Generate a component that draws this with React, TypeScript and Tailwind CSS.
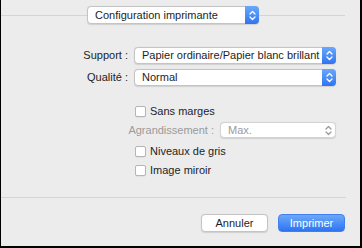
import React from "react";

function Chevrons({ color = "#ffffff" }: { color?: string }) {
  return (
    <svg width="7" height="11" viewBox="0 0 7 11" fill="none">
      <path d="M1 4 L3.5 1.5 L6 4" stroke={color} strokeWidth="1.3" strokeLinecap="round" strokeLinejoin="round" />
      <path d="M1 7 L3.5 9.5 L6 7" stroke={color} strokeWidth="1.3" strokeLinecap="round" strokeLinejoin="round" />
    </svg>
  );
}

function Popup({ label, width, height, disabled = false }: { label: string; width: string; height: string; disabled?: boolean }) {
  return (
    <div
      className={`${width} ${height} flex items-stretch rounded-[4px] border border-[#c4c4c4] bg-white shadow-[0_0.5px_1px_rgba(0,0,0,0.12)] ${disabled ? "bg-[#f5f5f5] border-[#d4d4d4]" : ""}`}
    >
      <div className={`flex-1 flex items-center pl-[7px] truncate ${disabled ? "text-[#9b9b9b]" : "text-[#1e1e1e]"}`}>{label}</div>
      {disabled ? (
        <div className="w-[14px] flex items-center justify-center">
          <Chevrons color="#9b9b9b" />
        </div>
      ) : (
        <div className="w-[14px] -my-px -mr-px flex items-center justify-center rounded-r-[4px] bg-gradient-to-b from-[#6aa8fa] to-[#2e74f2]">
          <Chevrons />
        </div>
      )}
    </div>
  );
}

function Check({ label }: { label: string }) {
  return (
    <div className="h-[16px] flex items-center ml-[134px]">
      <div className="w-[11px] h-[11px] rounded-[2px] border border-[#b5b5b5] bg-white shadow-[0_0.5px_0.5px_rgba(0,0,0,0.1)]" />
      <span className="ml-[4px] text-[#1e1e1e]">{label}</span>
    </div>
  );
}

export default function App() {
  return (
    <div
      className="w-[362px] h-[248px] bg-[#ececec] border-l border-r-2 border-b-2 border-black flex flex-col text-[11px] leading-none"
      style={{ fontFamily: '"Liberation Sans", Arial, sans-serif' }}
    >
      {/* Title popup on separator */}
      <div className="mt-[6px] flex items-center h-[18px]">
        <div className="w-[86px] h-px bg-[#d4d4d4]" />
        <div className="w-[172px] h-[18px] flex items-stretch rounded-[4px] border border-[#c4c4c4] bg-white shadow-[0_0.5px_1px_rgba(0,0,0,0.12)]">
          <div className="flex-1 flex items-center pl-[7px] text-[#1e1e1e]">Configuration imprimante</div>
          <div className="w-[14px] -my-px -mr-px flex items-center justify-center rounded-r-[4px] bg-gradient-to-b from-[#6aa8fa] to-[#2e74f2]">
            <Chevrons />
          </div>
        </div>
        <div className="w-[86px] h-px bg-[#d4d4d4]" />
      </div>

      {/* Support */}
      <div className="mt-[23px] flex items-center">
        <div className="w-[127px] text-right text-[#1e1e1e]">Support :</div>
        <div className="ml-[6px]">
          <Popup label="Papier ordinaire/Papier blanc brillant" width="w-[202px]" height="h-[17px]" />
        </div>
      </div>

      {/* Qualité */}
      <div className="mt-[5px] flex items-center">
        <div className="w-[127px] text-right text-[#1e1e1e]">Qualité :</div>
        <div className="ml-[6px]">
          <Popup label="Normal" width="w-[202px]" height="h-[17px]" />
        </div>
      </div>

      <div className="mt-[17px]">
        <Check label="Sans marges" />
      </div>

      {/* Agrandissement */}
      <div className="mt-[3px] flex items-center">
        <div className="w-[213px] text-right text-[#9b9b9b]">Agrandissement :</div>
        <div className="ml-[6px]">
          <Popup label="Max." width="w-[116px]" height="h-[16px]" disabled />
        </div>
      </div>

      <div className="mt-[5px]">
        <Check label="Niveaux de gris" />
      </div>
      <div className="mt-[3px]">
        <Check label="Image miroir" />
      </div>

      <div className="mt-[19px] w-[345px] h-px bg-[#d4d4d4]" />

      <div className="mt-[16px] flex justify-end gap-[10px] pr-[15px]">
        <button className="w-[67px] h-[18px] rounded-[4px] border border-[#c4c4c4] bg-white text-[#1e1e1e] shadow-[0_0.5px_1px_rgba(0,0,0,0.12)]">
          Annuler
        </button>
        <button className="w-[67px] h-[18px] rounded-[4px] border border-[#3f7ff0] bg-gradient-to-b from-[#6aa8fa] to-[#2e74f2] text-white">
          Imprimer
        </button>
      </div>
    </div>
  );
}
